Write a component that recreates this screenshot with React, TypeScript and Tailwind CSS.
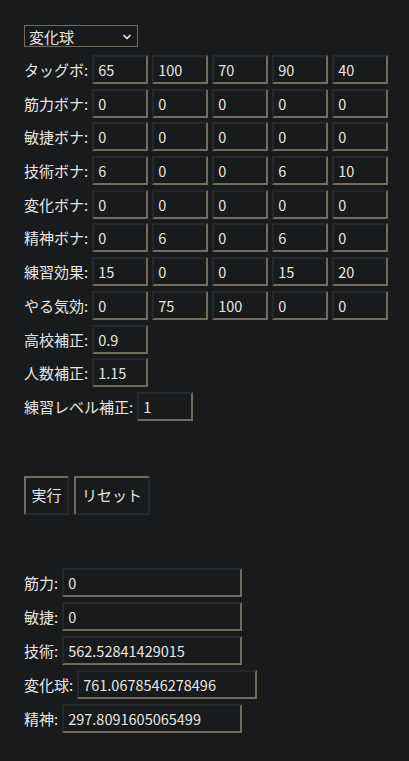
import { ChevronDown } from "lucide-react";

const rows = [
  { label: "タッグボ:", values: ["65", "100", "70", "90", "40"] },
  { label: "筋力ボナ:", values: ["0", "0", "0", "0", "0"] },
  { label: "敏捷ボナ:", values: ["0", "0", "0", "0", "0"] },
  { label: "技術ボナ:", values: ["6", "0", "0", "6", "10"] },
  { label: "変化ボナ:", values: ["0", "0", "0", "0", "0"] },
  { label: "精神ボナ:", values: ["0", "6", "0", "6", "0"] },
  { label: "練習効果:", values: ["15", "0", "0", "15", "20"] },
  { label: "やる気効:", values: ["0", "75", "100", "0", "0"] },
  { label: "高校補正:", values: ["0.9"] },
  { label: "人数補正:", values: ["1.15"] },
  { label: "練習レベル補正:", values: ["1"] },
];

const results = [
  { label: "筋力:", value: "0" },
  { label: "敏捷:", value: "0" },
  { label: "技術:", value: "562.52841429015" },
  { label: "変化球:", value: "761.0678546278496" },
  { label: "精神:", value: "297.8091605065499" },
];

// dark top/left, light bottom/right
const inset =
  "shrink-0 border-2 border-solid [border-color:#25282a_#736b5e_#736b5e_#25282a] bg-[#181a1b] text-[14.5px] text-[#e8e6e3] whitespace-nowrap overflow-hidden";

// light top/left, dark bottom/right
const outset =
  "shrink-0 border-2 border-solid [border-color:#736b5e_#25282a_#25282a_#736b5e] bg-[#181a1b] text-[#e8e6e3] whitespace-nowrap";

export default function App() {
  return (
    <div className="min-h-[761px] bg-[#181a1b] px-6 pt-[25px] text-[15px] text-[#e8e6e3] [font-family:'Noto_Sans_CJK_JP','Noto_Sans',sans-serif]">
      {/* select */}
      <div className="relative flex h-[22px] w-[114px] items-center border border-[#736b5e] pl-[4px]">
        <span className="leading-none">変化球</span>
        <ChevronDown className="absolute right-[4px] top-[5px] h-[12px] w-[12px]" strokeWidth={3.5} />
      </div>

      {/* inputs */}
      <div className="mt-[8px] flex flex-col">
        {rows.map((row) => (
          <div key={row.label} className="flex h-[33.7px] items-start gap-[4px] whitespace-nowrap">
            <span className="shrink-0 leading-[29px]">{row.label}</span>
            {row.values.map((v, i) => (
              <div key={i} className={`h-[29px] w-[56px] px-[4px] leading-[25px] ${inset}`}>
                {v}
              </div>
            ))}
          </div>
        ))}
      </div>

      {/* buttons */}
      <div className="mt-[50px] flex gap-[5px]">
        <button className={`h-[39px] w-[45px] ${outset}`}>実行</button>
        <button className={`h-[39px] w-[76px] ${outset}`}>リセット</button>
      </div>

      {/* results */}
      <div className="mt-[53px] flex flex-col">
        {results.map((r) => (
          <div key={r.label} className="flex h-[34px] items-start gap-[4px] whitespace-nowrap">
            <span className="shrink-0 leading-[29px]">{r.label}</span>
            <div className={`h-[29px] w-[180px] px-[4px] leading-[25px] ${inset}`}>{r.value}</div>
          </div>
        ))}
      </div>
    </div>
  );
}
